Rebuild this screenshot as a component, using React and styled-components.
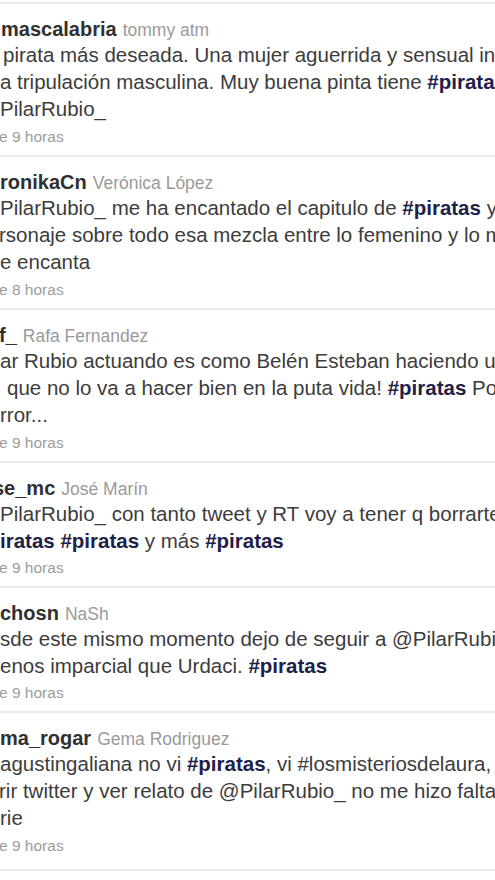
import React from "react";
import styled, { createGlobalStyle } from "styled-components";

const Global = createGlobalStyle`
  html, body { margin: 0; padding: 0; background: #fff; }
  body { overflow: hidden; }
`;

const Page = styled.div`
  width: 495px;
  height: 880px;
  overflow: hidden;
  padding-top: 2px;
  box-sizing: border-box;
  background: #fff;
  font-family: "Liberation Sans", Arial, sans-serif;
`;

const Tweet = styled.div`
  border-top: 2px solid #ebebeb;
  border-bottom: ${(p) => (p.$last ? "2px solid #ebebeb" : "none")};
  padding: 13px 0 ${(p) => (p.$last ? 10 : 5)}px;
  white-space: nowrap;
`;

const Header = styled.div`
  display: flex;
  align-items: baseline;
  gap: 6px;
  height: 24px;
  line-height: 24px;
  margin-left: ${(p) => p.$shift || 0}px;
`;

const Handle = styled.span`
  font-size: 20px;
  font-weight: bold;
  color: #303030;
`;

const Name = styled.span`
  font-size: 17.5px;
  color: #9a9a9a;
`;

const Line = styled.div`
  font-size: 20.5px;
  line-height: 27px;
  color: #3c3c3c;
  margin-left: ${(p) => p.$shift || 0}px;
`;

const Tag = styled.b`
  color: #1e2148;
`;

const Time = styled.div`
  font-size: 15.5px;
  line-height: 26px;
  margin-top: ${(p) => p.$gap}px;
  color: #9c9c9c;
  margin-left: ${(p) => p.$shift || 0}px;
`;

const tweets = [
  {
    handle: "mascalabria",
    hs: 1,
    name: "tommy atm",
    lines: [
      { s: 3, t: ["pirata más deseada. Una mujer aguerrida y sensual invade"] },
      { s: 0, t: ["a tripulación masculina. Muy buena pinta tiene ", { tag: "#piratas" }] },
      { s: 0, t: ["PilarRubio_"] },
    ],
    time: "e 9 horas",
  },
  {
    handle: "ronikaCn",
    hs: 0,
    name: "Verónica López",
    lines: [
      { s: 0, t: ["PilarRubio_ me ha encantado el capitulo de ", { tag: "#piratas" }, " y tu"] },
      { s: -1, t: ["rsonaje sobre todo esa mezcla entre lo femenino y lo masculino"] },
      { s: 0, t: ["e encanta"] },
    ],
    time: "e 8 horas",
  },
  {
    handle: "f_",
    hs: -1,
    name: "Rafa Fernandez",
    lines: [
      { s: 0, t: ["ar Rubio actuando es como Belén Esteban haciendo un"] },
      { s: 7, t: ["que no lo va a hacer bien en la puta vida! ", { tag: "#piratas" }, " Por"] },
      { s: 0, t: ["rror..."] },
    ],
    time: "e 9 horas",
  },
  {
    handle: "se_mc",
    hs: -7,
    name: "José Marín",
    lines: [
      { s: 0, t: ["PilarRubio_ con tanto tweet y RT voy a tener q borrarte"] },
      { s: 0, t: [{ tag: "iratas" }, " ", { tag: "#piratas" }, " y más ", { tag: "#piratas" }] },
    ],
    time: "e 9 horas",
  },
  {
    handle: "chosn",
    hs: 0,
    name: "NaSh",
    lines: [
      { s: 0, t: ["sde este mismo momento dejo de seguir a @PilarRubio_"] },
      { s: 0, t: ["enos imparcial que Urdaci. ", { tag: "#piratas" }] },
    ],
    time: "e 9 horas",
  },
  {
    handle: "ma_rogar",
    hs: 0,
    name: "Gema Rodriguez",
    lines: [
      { s: 0, t: ["agustingaliana no vi ", { tag: "#piratas" }, ", vi #losmisteriosdelaura, al"] },
      { s: -1, t: ["rir twitter y ver relato de @PilarRubio_ no me hizo falta"] },
      { s: 0, t: ["rie"] },
    ],
    time: "e 9 horas",
    last: true,
  },
];

export default function App() {
  return (
    <>
      <Global />
      <Page>
        {tweets.map((tw, i) => (
          <Tweet key={i} $last={tw.last}>
            <Header $shift={tw.hs}>
              <Handle>{tw.handle}</Handle>
              <Name>{tw.name}</Name>
            </Header>
            {tw.lines.map((ln, j) => (
              <Line key={j} $shift={ln.s}>
                {ln.t.map((seg, k) =>
                  typeof seg === "string" ? (
                    <React.Fragment key={k}>{seg}</React.Fragment>
                  ) : (
                    <Tag key={k}>{seg.tag}</Tag>
                  )
                )}
              </Line>
            ))}
            <Time $shift={-1} $gap={tw.lines.length === 2 ? 1 : 2}>
              {tw.time}
            </Time>
          </Tweet>
        ))}
      </Page>
    </>
  );
}
